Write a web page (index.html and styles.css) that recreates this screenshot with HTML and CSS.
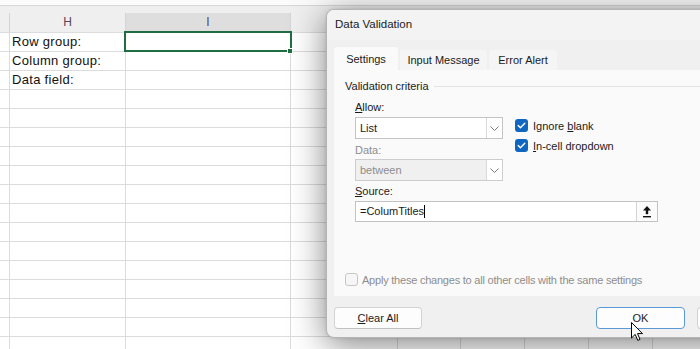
FILE: index.html
```html
<!DOCTYPE html>
<html>
<head>
<meta charset="utf-8">
<title>Data Validation</title>
<link rel="stylesheet" href="styles.css">
</head>
<body>
<div class="sheet">
  <div class="topbar"></div>
  <div class="colhead">
    <div class="hc c0"></div>
    <div class="hc ch">H</div>
    <div class="hc ci selcol">I</div>
    <div class="hc cj"></div>
    <div class="hc ck"></div>
    <div class="hc cl"></div>
    <div class="hc cm"></div>
    <div class="hc cn"></div>
    <div class="hc co"></div>
  </div>
  <div class="grid">
    <div class="col c0"></div>
    <div class="col ch">
      <div class="cell">Row group:</div>
      <div class="cell">Column group:</div>
      <div class="cell">Data field:</div>
    </div>
    <div class="col ci"><div class="cell active"><span class="handle"></span></div></div>
    <div class="col cj"></div>
    <div class="col ck"></div>
    <div class="col cl"></div>
    <div class="col cm"></div>
    <div class="col cn"></div>
    <div class="col co"></div>
  </div>
</div>

<div class="dialog">
  <div class="dlg-title">Data Validation</div>
  <div class="dlg-body">
    <div class="tabs">
      <div class="tab active">Settings</div>
      <div class="tab w2">Input Message</div>
      <div class="tab w3">Error Alert</div>
    </div>
    <div class="panel">
      <div class="legend">Validation criteria</div>
      <div class="indent">
        <div class="lbl"><u>A</u>llow:</div>
        <div class="crit">
          <div class="crit-left">
            <div class="combo">
              <span class="val">List</span>
              <span class="dd"><svg width="9" height="5" viewBox="0 0 9 5"><polyline points="0.5,0.5 4.5,4.5 8.5,0.5" fill="none" stroke="#7a7a7a" stroke-width="1"/></svg></span>
            </div>
            <div class="lbl dis">Data:</div>
            <div class="combo disabled">
              <span class="val">between</span>
              <span class="dd"><svg width="9" height="5" viewBox="0 0 9 5"><polyline points="0.5,0.5 4.5,4.5 8.5,0.5" fill="none" stroke="#7a7a7a" stroke-width="1"/></svg></span>
            </div>
          </div>
          <div class="crit-right">
            <div class="chk"><span class="box on"><svg width="13" height="13" viewBox="0 0 13 13"><polyline points="3.2,6.6 5.4,8.8 9.8,4.2" fill="none" stroke="#fff" stroke-width="1.4" stroke-linecap="round" stroke-linejoin="round"/></svg></span><span>Ignore <u>b</u>lank</span></div>
            <div class="chk"><span class="box on"><svg width="13" height="13" viewBox="0 0 13 13"><polyline points="3.2,6.6 5.4,8.8 9.8,4.2" fill="none" stroke="#fff" stroke-width="1.4" stroke-linecap="round" stroke-linejoin="round"/></svg></span><span><u>I</u>n-cell dropdown</span></div>
          </div>
        </div>
        <div class="lbl src-lbl"><u>S</u>ource:</div>
        <div class="source">
          <span class="val">=ColumTitles<span class="caret"></span></span>
          <span class="upl"><svg width="8" height="12" viewBox="0 0 8 12"><polygon points="4,0 0,4.5 8,4.5" fill="#111"/><rect x="2.8" y="4" width="2.4" height="4.2" fill="#111"/><rect x="0" y="10" width="8" height="1.4" fill="#111"/></svg></span>
        </div>
      </div>
      <div class="apply"><span class="box off"></span><span class="apply-txt">Apply these changes to all other cells with the same settings</span></div>
    </div>
    <div class="footer">
      <button class="btn"><u>C</u>lear All</button>
      <button class="btn ok">OK</button>
      <button class="btn cancel" aria-label="Cancel"></button>
    </div>
  </div>
</div>

<svg class="cursor" width="13" height="20" viewBox="0 0 13 20">
  <path d="M0.5,0.5 L0.5,16 L4.2,12.4 L6.8,18.4 L9,17.4 L6.5,11.6 L11.5,11.6 Z" fill="#fff" stroke="#000" stroke-width="1" stroke-linejoin="miter"/>
</svg>
</body>
</html>
```

FILE: styles.css
```css
* { box-sizing: border-box; }
html, body { margin: 0; padding: 0; }
body {
  width: 700px;
  height: 349px;
  overflow: hidden;
  background: #fff;
  position: relative;
  font-family: "Liberation Sans", Arial, sans-serif;
}

/* ---------- spreadsheet ---------- */
.sheet { display: flex; flex-direction: column; height: 349px; }
.topbar { height: 6px; background: #fbfbfb; border-bottom: 1px solid #d6d6d6; }
.colhead { display: flex; align-items: flex-end; height: 26px; background: #efefef; }
.hc {
  height: 19px;
  border-right: 1px solid #d4d4d4;
  text-align: center;
  font-size: 12px;
  line-height: 19px;
  color: #5a4656;
  flex: none;
}
.hc.selcol { background: #dedede; }
.c0 { width: 10px; }
.ch { width: 116px; }
.ci { width: 165px; }
.cj { width: 107px; }
.ck { width: 63px; }
.cl, .cm, .cn, .co { width: 64px; }

.grid {
  flex: 1;
  display: flex;
  background: repeating-linear-gradient(to bottom, #dcdcdc 0 1px, transparent 1px 19px);
}
.col { border-right: 1px solid #dcdcdc; flex: none; }
.cell {
  height: 19px;
  padding: 1px 0 0 2px;
  line-height: 18px;
  font-size: 13px;
  letter-spacing: 0.3px;
  color: #111;
  white-space: nowrap;
}
.cell.active { position: relative; }
.cell.active::after {
  content: "";
  position: absolute;
  left: -2px; right: -2px; top: -1px; bottom: -1px;
  border: 2px solid #1e6e42;
}
.handle {
  position: absolute;
  right: -3px; bottom: -3px;
  width: 6px; height: 6px;
  background: #1e6e42;
  border: 1px solid #fff;
  z-index: 2;
}

/* ---------- dialog ---------- */
.dialog {
  position: absolute;
  left: 326px;
  top: 9px;
  width: 440px;
  height: 329px;
  border: 1px solid #b5b5b5;
  border-radius: 8px;
  background: #f0f0f0;
  box-shadow: 0 6px 34px rgba(0, 0, 0, 0.5), 0 0 3px rgba(0, 0, 0, 0.12);
  font-size: 11px;
  color: #1b1b1b;
  overflow: hidden;
}
.dlg-title {
  height: 30px;
  line-height: 29px;
  padding-left: 8px;
  font-size: 11.5px;
  background: #f3f3f3;
}
.dlg-body { padding: 7px 0 0 7px; }
.tabs { display: flex; align-items: flex-end; gap: 2px; height: 23px; }
.tab {
  width: 64px;
  height: 20px;
  line-height: 20px;
  text-align: center;
  background: #f5f5f5;
  border-radius: 3px 3px 0 0;
}
.tab.active { height: 23px; padding-top: 1px; line-height: 23px; background: #fafafa; }
.tab.w2 { width: 87px; }
.tab.w3 { width: 68px; }

.panel {
  height: 226px;
  width: 420px;
  background: #fafafa;
  padding: 9px 0 10px 11px;
  display: flex;
  flex-direction: column;
}
.legend { display: flex; align-items: center; line-height: 14px; }
.legend::after { content: ""; flex: 1; height: 1px; background: #e2e2e2; margin-left: 5px; }
.indent { padding-left: 10px; }
.lbl { line-height: 14px; margin-top: 7px; }
.lbl.dis { color: #8d8d8d; margin-top: 4px; }
.lbl.src-lbl { margin-top: 3px; }
.crit { display: flex; }
.crit-left { width: 148px; }
.combo {
  margin-top: 3px;
  height: 22px;
  border: 1px solid #c3c3c3;
  background: #fff;
  display: flex;
}
.combo.disabled { margin-top: 2px; background: #f0f0f0; border-color: #cdcdcd; color: #8d8d8d; }
.val { flex: 1; padding-left: 4px; line-height: 20px; white-space: nowrap; }
.dd {
  width: 16px;
  border-left: 1px solid #d9d9d9;
  background: #fff;
  display: flex;
  align-items: center;
  justify-content: center;
}
.crit-right { margin-left: 12px; padding-top: 5px; }
.chk { display: flex; align-items: center; gap: 5px; height: 13px; margin-bottom: 7px; }
.box {
  width: 13px; height: 13px;
  border-radius: 3px;
  flex: none;
  display: block;
}
.box svg { display: block; }
.box.on { background: #0f66c0; }
.box.off { border: 1px solid #c6c6c6; background: #f6f6f6; }

.source {
  margin-top: 3px;
  width: 303px;
  height: 21px;
  border: 1px solid #c3c3c3;
  background: #fff;
  display: flex;
}
.source .val { line-height: 19px; display: flex; align-items: center; }
.caret { display: inline-block; width: 1px; height: 13px; background: #000; margin-left: 0; }
.upl {
  width: 21px;
  border-left: 1px solid #d4d4d4;
  background: #fbfbfb;
  display: flex;
  align-items: center;
  justify-content: center;
}
.upl svg { display: block; }

.apply {
  margin-top: auto;
  display: flex;
  align-items: center;
  gap: 4px;
  height: 13px;
  color: #8d8d8d;
  white-space: nowrap;
}
.apply-txt { letter-spacing: -0.22px; }

.footer { display: flex; padding-top: 11px; }
.btn {
  width: 88px;
  height: 22px;
  padding: 0;
  font: inherit;
  font-size: 11px;
  color: #1b1b1b;
  background: #fdfdfd;
  border: 1px solid #d3d3d3;
  border-bottom-color: #c2c2c2;
  border-radius: 4px;
  line-height: 20px;
  flex: none;
}
.btn.ok { width: 89px; margin-left: 174px; border-color: #5a98d6; }
.btn.cancel { width: 89px; margin-left: 12px; }

.cursor { position: absolute; left: 631px; top: 322px; }
```
